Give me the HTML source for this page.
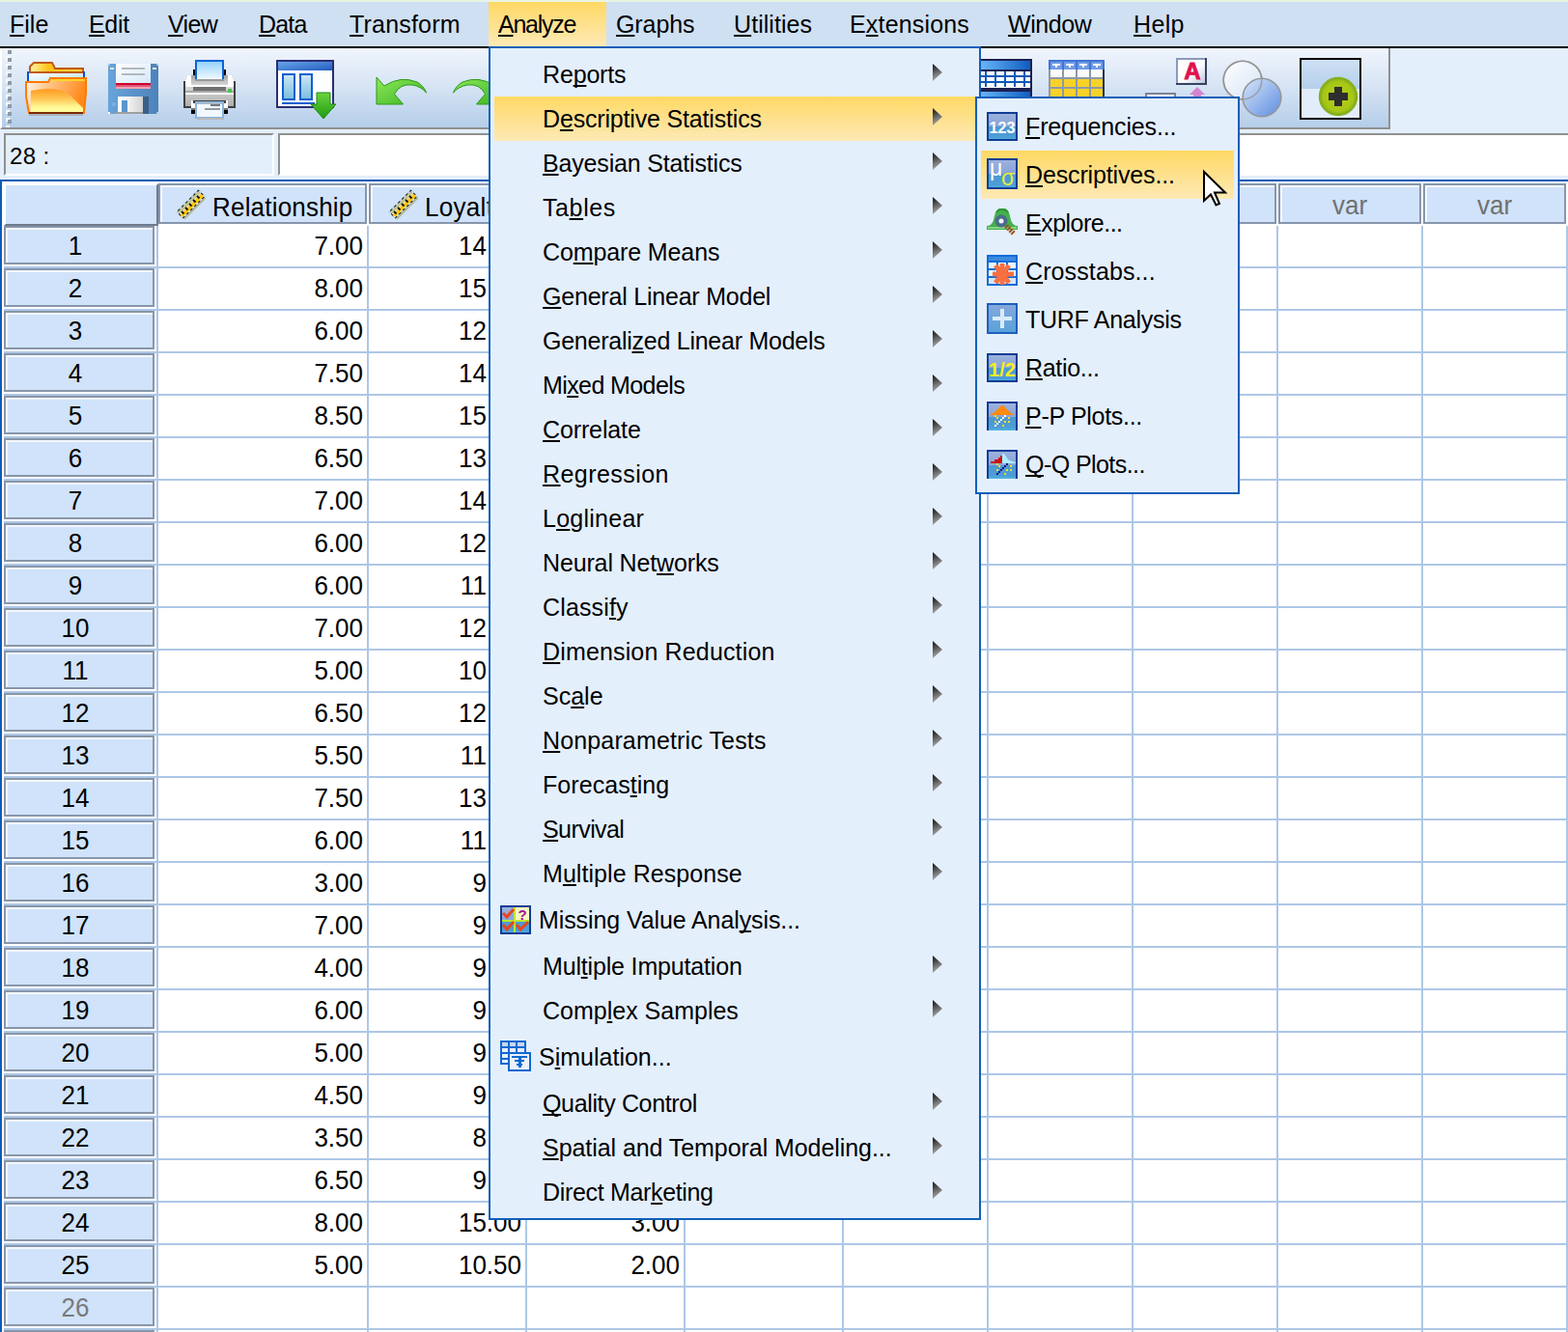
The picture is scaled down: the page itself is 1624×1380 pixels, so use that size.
<!DOCTYPE html>
<html><head><meta charset="utf-8"><title>SPSS Data Editor</title>
<style>
html,body{margin:0;padding:0}
body{width:1624px;height:1380px;overflow:hidden;background:#fff;position:relative;font-family:"Liberation Sans",Arial,sans-serif;color:#000}
div,span{box-sizing:border-box}
u{text-decoration:underline;text-decoration-thickness:2px;text-underline-offset:2px;text-decoration-skip-ink:none}
/* ---- grid ---- */
#grid{position:absolute;left:0;top:184px;width:1624px;height:1196px;background:#fff;overflow:hidden}
#grid::before{content:"";position:absolute;left:0;top:0;width:1624px;height:2px;background:#e4effc}
#grid::after{content:"";position:absolute;left:0;top:2px;width:1624px;height:1194px;border-top:2px solid #0b5cb6;border-left:2px solid #0b5cb6}
#grid>div{position:absolute}
#grid{font-size:26px}
.vl{top:50px;width:2px;height:1150px;background:#adc7e7}
.hl{left:4px;width:1620px;height:2px;background:#adc7e7;margin-top:-184px}
.corner{left:4px;top:6px;width:160px;height:44px;background:#d0e3fa;border-top:2px solid #fff;border-left:2px solid #fff;border-right:2px solid #6f7b8c;border-bottom:2px solid #6f7b8c}
.ch{top:6px;height:42px;background:#d0e3fa;border:2px solid #8896aa;box-shadow:inset 2px 2px 0 #f4f8fe;white-space:nowrap;overflow:hidden}
.ch.var{color:#707070}
.ch.var .gt{left:0;width:100%;top:6px;text-align:center}
.ch.real .ruler{position:absolute;left:15px;top:4px}
.ch.real .gt{left:54px;top:8px}
.rh{left:4px;width:156px;height:40px;margin-top:-184px;background:#d0e3fa;border:2px solid #8896aa;box-shadow:inset 2px 2px 0 #f4f8fe}
.rh .gt{left:0;width:144px;top:4px;text-align:center}
.rh.dim{color:#7a7a7a}
.dc{height:42px;margin-top:-184px}
.dc .gt{right:4px;top:6px}
.gt{position:absolute;display:block;height:30px;line-height:30px;transform:scaleY(1.07);transform-origin:0 24px;white-space:nowrap}
/* ---- chrome ---- */
#strip{position:absolute;left:0;top:0;width:1624px;height:2px;background:#e9f5e2}
#menubar{position:absolute;left:0;top:2px;width:1624px;height:46px;background:#cfe0f3;font-size:25px;line-height:46px}
#menubar span{position:absolute;top:0;white-space:nowrap}
#menubar .hot{position:absolute;left:506px;top:0;width:122px;height:46px;background:linear-gradient(#ffd964,#fde9b6)}
#blackline{position:absolute;left:0;top:48px;width:1624px;height:2px;background:#000}
#tbwrap{position:absolute;left:0;top:50px;width:1624px;height:84px;background:#fff}
#toolbar{position:absolute;left:0;top:0;width:1440px;height:84px;border-left:2px solid #fff;border-right:2px solid #909090;border-bottom:2px solid #909090;background:linear-gradient(#f0f5fd 0%,#dbe7f6 40%,#b5cee9 100%)}
#tbright{position:absolute;left:1440px;top:0;width:184px;height:88px;background:#e4effc}
#cellbox{position:absolute;left:4px;top:138px;width:280px;height:44px;background:#e4effc;border-top:2px solid #909090;border-left:2px solid #909090;border-right:2px solid #fff;border-bottom:2px solid #fff;font-size:24px;line-height:44px;padding-left:4px;letter-spacing:.4px}
#valbox{position:absolute;left:288px;top:138px;width:1340px;height:44px;background:#fff;border-top:2px solid #909090;border-left:2px solid #909090;border-bottom:2px solid #fff}
#midstrip{position:absolute;left:0;top:134px;width:1624px;height:52px;background:#e4effc}
.ico{position:absolute}
/* ---- menus ---- */
.menu{position:absolute;background:#e4effc;border:2px solid #0f5fb9;font-size:25px}
.mi{position:absolute;left:4px;height:46px;line-height:46px;white-space:nowrap}
.mi .t{position:absolute;left:50px;top:0}
.mi.hot{background:linear-gradient(#ffd964,#fde9b6)}
.arr{position:absolute;width:10px;height:18px;background:linear-gradient(155deg,#1c1c1c 0%,#3c3c3c 25%,#777 55%,#b4b4b4 90%);clip-path:polygon(0 0,100% 50%,0 100%)}
.mi .arr{left:454px;top:12px}
</style></head>
<body>
<svg width="0" height="0" style="position:absolute">
<defs>
<linearGradient id="gIcoA" x1="0" y1="0" x2="0" y2="1"><stop offset="0" stop-color="#9db2de"/><stop offset=".5" stop-color="#89a4d6"/><stop offset=".52" stop-color="#4c98d2"/><stop offset=".9" stop-color="#4c9ed6"/><stop offset="1" stop-color="#52b8e4"/></linearGradient>
<linearGradient id="gIcoT" x1="0" y1="0" x2="0" y2="1"><stop offset="0" stop-color="#86a8dc"/><stop offset="1" stop-color="#58a2d8"/></linearGradient>
<linearGradient id="gRul" x1="0" y1="0" x2="1" y2="1" gradientUnits="userSpaceOnUse"><stop offset="0" stop-color="#c9cf9c"/></linearGradient>
<symbol id="ruler" viewBox="0 0 32 32">
<polygon points="3,24 25,2 31,8 9,30" fill="#9a9242" opacity=".55" transform="translate(1.500,1.500)"/>
<polygon points="1.500,23.500 24.500,0.500 31.500,7.500 8.500,30.500" fill="#111"/>
<polygon points="3,23.500 24.500,2 30,7.500 8.500,29" fill="#c3c98e"/>
<polygon points="6,26.500 27.500,5 30,7.500 8.500,29" fill="#ffc800"/>
<polygon points="5,25.500 26.500,4 27.500,5 6,26.500" fill="#f5d5a0"/>
<g stroke="#111" stroke-width="1.800"><path d="M9.500 25.500 l-2.500-2.500 M13.500 21.500 l-2.500-2.500 M17.500 17.500 l-2.500-2.500 M21.500 13.500 l-2.500-2.500 M25.500 9.500 l-2.500-2.500"/></g>
<polygon points="2.250,23.500 24.500,1.250 30.750,7.500 8.500,29.750" fill="none" stroke="#d0e3fa" stroke-width="1.500" stroke-dasharray="2.830 2.830" stroke-dashoffset="1.400"/>
</symbol>
<symbol id="ic-freq" viewBox="0 0 32 32">
<rect x="1" y="2" width="30" height="28" fill="url(#gIcoA)" stroke="#0f3c96" stroke-width="2"/>
<text x="16" y="23" font-family="Liberation Sans, sans-serif" font-weight="bold" font-size="17" text-anchor="middle" fill="#fff" textLength="27" lengthAdjust="spacingAndGlyphs">123</text>
</symbol>
<symbol id="ic-desc" viewBox="0 0 32 32">
<rect x="1" y="1" width="30" height="30" fill="url(#gIcoA)" stroke="#0f3c96" stroke-width="2"/>
<text x="3" y="17.500" font-family="Liberation Sans, sans-serif" font-size="23" fill="#fff">μ</text>
<text x="15" y="27.500" font-family="Liberation Sans, sans-serif" font-size="23" fill="#e6ea3c">σ</text>
</symbol>
<symbol id="ic-expl" viewBox="0 0 32 32">
<path d="M0 20 Q5 20 7 14 Q9 3 13 2 H19 Q23 3 25 14 Q27 20 32 20 V24 H0 Z" fill="#45b04c"/>
<path d="M1 22 H31" stroke="#86d488" stroke-width="2"/>
<path d="M10 6 Q12 3 16 3 Q20 3 22 6" stroke="#2f9838" stroke-width="2" fill="none"/>
<circle cx="15" cy="15" r="6.500" fill="#4a6c8a"/>
<circle cx="15" cy="15" r="2.500" fill="#f0f4f8"/>
<path d="M20 20 L28 28" stroke="#9a5020" stroke-width="5" stroke-dasharray="2 1"/>
</symbol>
<symbol id="ic-cross" viewBox="0 0 32 32">
<rect x="1" y="1" width="30" height="30" fill="#eef5fd" stroke="#0f6cd8" stroke-width="2"/>
<rect x="2" y="2" width="28" height="6" fill="#3a8ae0"/>
<rect x="2" y="24" width="28" height="6" fill="#d4e8fb"/>
<g fill="#0f6cd8"><rect x="2" y="6" width="28" height="2"/><rect x="2" y="14" width="28" height="2"/><rect x="2" y="22" width="28" height="2"/><rect x="10" y="8" width="2" height="22"/><rect x="20" y="8" width="2" height="22"/></g>
<g stroke="#f87040" stroke-width="5" stroke-linecap="butt"><path d="M16 9 V31"/><path d="M6 20 H28"/><path d="M9 11 L23 29"/><path d="M23 11 L9 29"/></g>
</symbol>
<symbol id="ic-turf" viewBox="0 0 32 32">
<rect x="1" y="1" width="30" height="30" fill="url(#gIcoT)" stroke="#1f5fc0" stroke-width="2"/>
<rect x="6" y="14" width="20" height="4" fill="#d8ecf8"/><rect x="14" y="6" width="4" height="20" fill="#d8ecf8"/>
</symbol>
<symbol id="ic-ratio" viewBox="0 0 32 32">
<rect x="1" y="2" width="30" height="28" fill="url(#gIcoA)" stroke="#0f3c96" stroke-width="2"/>
<text x="16" y="25" font-family="Liberation Sans, sans-serif" font-weight="bold" font-size="20" text-anchor="middle" fill="#f6ee22" textLength="28" lengthAdjust="spacingAndGlyphs">1/2</text>
</symbol>
<symbol id="ic-pp" viewBox="0 0 32 32">
<rect x="2" y="3" width="28" height="28" fill="url(#gIcoA)"/>
<path d="M1 31 V2 H31 V31" fill="none" stroke="#0f3c96" stroke-width="2"/>
<path d="M2 15 L8 12 L15 5 L17 5 L24 12 L28 15 Z" fill="#ff8a10"/>
<g fill="#fff"><rect x="18" y="15" width="2" height="2"/><rect x="16" y="17" width="2" height="2"/><rect x="14" y="19" width="2" height="2"/><rect x="12" y="21" width="2" height="2"/><rect x="10" y="23" width="2" height="2"/><rect x="8" y="25" width="2" height="2"/></g>
<g fill="#f8e020"><rect x="8" y="15" width="2" height="2"/><rect x="10" y="17" width="2" height="2"/><rect x="22" y="17" width="2" height="2"/><rect x="8" y="21" width="2" height="2"/><rect x="18" y="21" width="2" height="2"/><rect x="22" y="21" width="2" height="2"/><rect x="16" y="25" width="2" height="2"/></g>
</symbol>
<symbol id="ic-qq" viewBox="0 0 32 32">
<rect x="2" y="3" width="28" height="28" fill="url(#gIcoA)"/>
<path d="M1 31 V2 H31 V31" fill="none" stroke="#0f3c96" stroke-width="2"/>
<path d="M4 15 V13 H8 V11 H12 V9 H14 V7 H16 V15 Z" fill="#cc1212"/>
<path d="M16 15 V5 H18 L22 11 L26 13 L30 14 V15 Z" fill="#aaf0ff"/>
<g fill="#10108a"><rect x="20" y="15" width="2" height="2"/><rect x="18" y="17" width="2" height="2"/><rect x="16" y="19" width="2" height="2"/><rect x="14" y="21" width="2" height="2"/><rect x="12" y="23" width="2" height="2"/><rect x="10" y="25" width="2" height="2"/></g>
<g fill="#f8e020"><rect x="10" y="15" width="2" height="2"/><rect x="12" y="17" width="2" height="2"/><rect x="24" y="17" width="2" height="2"/><rect x="10" y="21" width="2" height="2"/><rect x="20" y="21" width="2" height="2"/><rect x="24" y="21" width="2" height="2"/><rect x="18" y="25" width="2" height="2"/></g>
</symbol>
<symbol id="ic-mva" viewBox="0 0 32 32">
<rect x="1" y="2" width="30" height="28" fill="url(#gIcoA)" stroke="#0f3c96" stroke-width="2"/>
<rect x="16" y="3" width="14" height="13" fill="#f6f6c0"/>
<rect x="14" y="3" width="2" height="26" fill="#b8e830"/><rect x="2" y="16" width="28" height="2" fill="#b8e830"/>
<g fill="none" stroke="#e84420" stroke-width="3"><path d="M3 9 L7 13 L14 5"/><path d="M3 21 L7 26 L14 18"/><path d="M17 21 L21 26 L29 18"/></g>
<text x="23" y="15.500" font-family="Liberation Sans, sans-serif" font-weight="bold" font-size="15" text-anchor="middle" fill="#a010a0">?</text>
</symbol>
<symbol id="ic-sim" viewBox="0 0 32 32">
<rect x="1" y="1" width="25" height="23" fill="#e4effb" stroke="#1068d0" stroke-width="2"/>
<g fill="#1068d0"><rect x="1" y="6" width="25" height="2"/><rect x="1" y="12" width="25" height="2"/><rect x="1" y="18" width="25" height="2"/><rect x="8" y="1" width="2" height="23"/><rect x="16" y="1" width="2" height="23"/></g>
<g fill="#c4d8ee"><rect x="2" y="2" width="6" height="4"/><rect x="10" y="2" width="6" height="4"/><rect x="18" y="2" width="7" height="4"/></g>
<rect x="9" y="13" width="22" height="18" fill="#eaf1f9" stroke="#1068d0" stroke-width="2"/>
<g fill="#1068d0"><rect x="12" y="16" width="16" height="2"/><rect x="15" y="20" width="10" height="2"/><rect x="17" y="24" width="6" height="2"/><rect x="19" y="18" width="3" height="10"/></g>
</symbol>
</defs>
</svg>
<div id="grid">
<div class="vl" style="left:162px"></div><div class="vl" style="left:380px"></div><div class="vl" style="left:544px"></div><div class="vl" style="left:708px"></div><div class="vl" style="left:872px"></div><div class="vl" style="left:1022px"></div><div class="vl" style="left:1172px"></div><div class="vl" style="left:1322px"></div><div class="vl" style="left:1472px"></div><div class="vl" style="left:1622px"></div>
<div class="hl" style="top:276px"></div><div class="hl" style="top:320px"></div><div class="hl" style="top:364px"></div><div class="hl" style="top:408px"></div><div class="hl" style="top:452px"></div><div class="hl" style="top:496px"></div><div class="hl" style="top:540px"></div><div class="hl" style="top:584px"></div><div class="hl" style="top:628px"></div><div class="hl" style="top:672px"></div><div class="hl" style="top:716px"></div><div class="hl" style="top:760px"></div><div class="hl" style="top:804px"></div><div class="hl" style="top:848px"></div><div class="hl" style="top:892px"></div><div class="hl" style="top:936px"></div><div class="hl" style="top:980px"></div><div class="hl" style="top:1024px"></div><div class="hl" style="top:1068px"></div><div class="hl" style="top:1112px"></div><div class="hl" style="top:1156px"></div><div class="hl" style="top:1200px"></div><div class="hl" style="top:1244px"></div><div class="hl" style="top:1288px"></div><div class="hl" style="top:1332px"></div><div class="hl" style="top:1376px"></div><div class="hl" style="top:1420px"></div>
<div class="corner"></div>
<div class="ch real" style="left:164px;width:216px"><svg class="ruler" style="left:15px" width="32" height="32" viewBox="0 0 32 32"><use href="#ruler"/></svg><span class="gt" style="left:54px;letter-spacing:0.2px">Relationship</span></div>
<div class="ch real" style="left:382px;width:162px"><svg class="ruler" style="left:17px" width="32" height="32" viewBox="0 0 32 32"><use href="#ruler"/></svg><span class="gt" style="left:56px;letter-spacing:0.3px">Loyalty</span></div>
<div class="ch real" style="left:546px;width:162px"><svg class="ruler" style="left:17px" width="32" height="32" viewBox="0 0 32 32"><use href="#ruler"/></svg><span class="gt" style="left:56px;letter-spacing:0.3px">Outcome</span></div>
<div class="ch var" style="left:710px;width:162px"><span class="gt">var</span></div>
<div class="ch var" style="left:874px;width:148px"><span class="gt">var</span></div>
<div class="ch var" style="left:1024px;width:148px"><span class="gt">var</span></div>
<div class="ch var" style="left:1174px;width:148px"><span class="gt">var</span></div>
<div class="ch var" style="left:1324px;width:148px"><span class="gt">var</span></div>
<div class="ch var" style="left:1474px;width:148px"><span class="gt">var</span></div>
<div class="rh" style="top:234px"><span class="gt">1</span></div><div class="dc" style="top:234px;left:164px;width:216px"><span class="gt">7.00</span></div><div class="dc" style="top:234px;left:382px;width:162px;clip-path:inset(0 40px 0 0)"><span class="gt">14.00</span></div><div class="dc" style="top:234px;left:546px;width:162px"><span class="gt">3.00</span></div>
<div class="rh" style="top:278px"><span class="gt">2</span></div><div class="dc" style="top:278px;left:164px;width:216px"><span class="gt">8.00</span></div><div class="dc" style="top:278px;left:382px;width:162px;clip-path:inset(0 40px 0 0)"><span class="gt">15.00</span></div><div class="dc" style="top:278px;left:546px;width:162px"><span class="gt">3.00</span></div>
<div class="rh" style="top:322px"><span class="gt">3</span></div><div class="dc" style="top:322px;left:164px;width:216px"><span class="gt">6.00</span></div><div class="dc" style="top:322px;left:382px;width:162px;clip-path:inset(0 40px 0 0)"><span class="gt">12.00</span></div><div class="dc" style="top:322px;left:546px;width:162px"><span class="gt">2.00</span></div>
<div class="rh" style="top:366px"><span class="gt">4</span></div><div class="dc" style="top:366px;left:164px;width:216px"><span class="gt">7.50</span></div><div class="dc" style="top:366px;left:382px;width:162px;clip-path:inset(0 40px 0 0)"><span class="gt">14.50</span></div><div class="dc" style="top:366px;left:546px;width:162px"><span class="gt">3.00</span></div>
<div class="rh" style="top:410px"><span class="gt">5</span></div><div class="dc" style="top:410px;left:164px;width:216px"><span class="gt">8.50</span></div><div class="dc" style="top:410px;left:382px;width:162px;clip-path:inset(0 40px 0 0)"><span class="gt">15.50</span></div><div class="dc" style="top:410px;left:546px;width:162px"><span class="gt">3.00</span></div>
<div class="rh" style="top:454px"><span class="gt">6</span></div><div class="dc" style="top:454px;left:164px;width:216px"><span class="gt">6.50</span></div><div class="dc" style="top:454px;left:382px;width:162px;clip-path:inset(0 40px 0 0)"><span class="gt">13.00</span></div><div class="dc" style="top:454px;left:546px;width:162px"><span class="gt">2.00</span></div>
<div class="rh" style="top:498px"><span class="gt">7</span></div><div class="dc" style="top:498px;left:164px;width:216px"><span class="gt">7.00</span></div><div class="dc" style="top:498px;left:382px;width:162px;clip-path:inset(0 40px 0 0)"><span class="gt">14.00</span></div><div class="dc" style="top:498px;left:546px;width:162px"><span class="gt">3.00</span></div>
<div class="rh" style="top:542px"><span class="gt">8</span></div><div class="dc" style="top:542px;left:164px;width:216px"><span class="gt">6.00</span></div><div class="dc" style="top:542px;left:382px;width:162px;clip-path:inset(0 40px 0 0)"><span class="gt">12.50</span></div><div class="dc" style="top:542px;left:546px;width:162px"><span class="gt">2.00</span></div>
<div class="rh" style="top:586px"><span class="gt">9</span></div><div class="dc" style="top:586px;left:164px;width:216px"><span class="gt">6.00</span></div><div class="dc" style="top:586px;left:382px;width:162px;clip-path:inset(0 40px 0 0)"><span class="gt">11.00</span></div><div class="dc" style="top:586px;left:546px;width:162px"><span class="gt">2.00</span></div>
<div class="rh" style="top:630px"><span class="gt">10</span></div><div class="dc" style="top:630px;left:164px;width:216px"><span class="gt">7.00</span></div><div class="dc" style="top:630px;left:382px;width:162px;clip-path:inset(0 40px 0 0)"><span class="gt">12.00</span></div><div class="dc" style="top:630px;left:546px;width:162px"><span class="gt">3.00</span></div>
<div class="rh" style="top:674px"><span class="gt">11</span></div><div class="dc" style="top:674px;left:164px;width:216px"><span class="gt">5.00</span></div><div class="dc" style="top:674px;left:382px;width:162px;clip-path:inset(0 40px 0 0)"><span class="gt">10.00</span></div><div class="dc" style="top:674px;left:546px;width:162px"><span class="gt">2.00</span></div>
<div class="rh" style="top:718px"><span class="gt">12</span></div><div class="dc" style="top:718px;left:164px;width:216px"><span class="gt">6.50</span></div><div class="dc" style="top:718px;left:382px;width:162px;clip-path:inset(0 40px 0 0)"><span class="gt">12.50</span></div><div class="dc" style="top:718px;left:546px;width:162px"><span class="gt">2.00</span></div>
<div class="rh" style="top:762px"><span class="gt">13</span></div><div class="dc" style="top:762px;left:164px;width:216px"><span class="gt">5.50</span></div><div class="dc" style="top:762px;left:382px;width:162px;clip-path:inset(0 40px 0 0)"><span class="gt">11.50</span></div><div class="dc" style="top:762px;left:546px;width:162px"><span class="gt">2.00</span></div>
<div class="rh" style="top:806px"><span class="gt">14</span></div><div class="dc" style="top:806px;left:164px;width:216px"><span class="gt">7.50</span></div><div class="dc" style="top:806px;left:382px;width:162px;clip-path:inset(0 40px 0 0)"><span class="gt">13.00</span></div><div class="dc" style="top:806px;left:546px;width:162px"><span class="gt">3.00</span></div>
<div class="rh" style="top:850px"><span class="gt">15</span></div><div class="dc" style="top:850px;left:164px;width:216px"><span class="gt">6.00</span></div><div class="dc" style="top:850px;left:382px;width:162px;clip-path:inset(0 40px 0 0)"><span class="gt">11.00</span></div><div class="dc" style="top:850px;left:546px;width:162px"><span class="gt">2.00</span></div>
<div class="rh" style="top:894px"><span class="gt">16</span></div><div class="dc" style="top:894px;left:164px;width:216px"><span class="gt">3.00</span></div><div class="dc" style="top:894px;left:382px;width:162px;clip-path:inset(0 40px 0 0)"><span class="gt">9.00</span></div><div class="dc" style="top:894px;left:546px;width:162px"><span class="gt">1.00</span></div>
<div class="rh" style="top:938px"><span class="gt">17</span></div><div class="dc" style="top:938px;left:164px;width:216px"><span class="gt">7.00</span></div><div class="dc" style="top:938px;left:382px;width:162px;clip-path:inset(0 40px 0 0)"><span class="gt">9.50</span></div><div class="dc" style="top:938px;left:546px;width:162px"><span class="gt">2.00</span></div>
<div class="rh" style="top:982px"><span class="gt">18</span></div><div class="dc" style="top:982px;left:164px;width:216px"><span class="gt">4.00</span></div><div class="dc" style="top:982px;left:382px;width:162px;clip-path:inset(0 40px 0 0)"><span class="gt">9.00</span></div><div class="dc" style="top:982px;left:546px;width:162px"><span class="gt">1.00</span></div>
<div class="rh" style="top:1026px"><span class="gt">19</span></div><div class="dc" style="top:1026px;left:164px;width:216px"><span class="gt">6.00</span></div><div class="dc" style="top:1026px;left:382px;width:162px;clip-path:inset(0 40px 0 0)"><span class="gt">9.50</span></div><div class="dc" style="top:1026px;left:546px;width:162px"><span class="gt">2.00</span></div>
<div class="rh" style="top:1070px"><span class="gt">20</span></div><div class="dc" style="top:1070px;left:164px;width:216px"><span class="gt">5.00</span></div><div class="dc" style="top:1070px;left:382px;width:162px;clip-path:inset(0 40px 0 0)"><span class="gt">9.00</span></div><div class="dc" style="top:1070px;left:546px;width:162px"><span class="gt">1.00</span></div>
<div class="rh" style="top:1114px"><span class="gt">21</span></div><div class="dc" style="top:1114px;left:164px;width:216px"><span class="gt">4.50</span></div><div class="dc" style="top:1114px;left:382px;width:162px;clip-path:inset(0 40px 0 0)"><span class="gt">9.00</span></div><div class="dc" style="top:1114px;left:546px;width:162px"><span class="gt">1.00</span></div>
<div class="rh" style="top:1158px"><span class="gt">22</span></div><div class="dc" style="top:1158px;left:164px;width:216px"><span class="gt">3.50</span></div><div class="dc" style="top:1158px;left:382px;width:162px;clip-path:inset(0 40px 0 0)"><span class="gt">8.50</span></div><div class="dc" style="top:1158px;left:546px;width:162px"><span class="gt">1.00</span></div>
<div class="rh" style="top:1202px"><span class="gt">23</span></div><div class="dc" style="top:1202px;left:164px;width:216px"><span class="gt">6.50</span></div><div class="dc" style="top:1202px;left:382px;width:162px;clip-path:inset(0 40px 0 0)"><span class="gt">9.50</span></div><div class="dc" style="top:1202px;left:546px;width:162px"><span class="gt">2.00</span></div>
<div class="rh" style="top:1246px"><span class="gt">24</span></div><div class="dc" style="top:1246px;left:164px;width:216px"><span class="gt">8.00</span></div><div class="dc" style="top:1246px;left:382px;width:162px"><span class="gt">15.00</span></div><div class="dc" style="top:1246px;left:546px;width:162px"><span class="gt">3.00</span></div>
<div class="rh" style="top:1290px"><span class="gt">25</span></div><div class="dc" style="top:1290px;left:164px;width:216px"><span class="gt">5.00</span></div><div class="dc" style="top:1290px;left:382px;width:162px"><span class="gt">10.50</span></div><div class="dc" style="top:1290px;left:546px;width:162px"><span class="gt">2.00</span></div>
<div class="rh dim" style="top:1334px"><span class="gt">26</span></div>
<div class="rh dim" style="top:1378px"><span class="gt">27</span></div>
</div>
<div id="strip"></div>
<div id="menubar"><div class="hot"></div>
<span style="left:10px;letter-spacing:0.000px"><u>F</u>ile</span><span style="left:92px;letter-spacing:-0.333px"><u>E</u>dit</span><span style="left:174px;letter-spacing:-0.667px"><u>V</u>iew</span><span style="left:268px;letter-spacing:-0.833px"><u>D</u>ata</span><span style="left:362px;letter-spacing:0.188px"><u>T</u>ransform</span><span style="left:516px;letter-spacing:-1.250px"><u>A</u>nalyze</span><span style="left:638px;letter-spacing:-0.100px"><u>G</u>raphs</span><span style="left:760px;letter-spacing:0.062px"><u>U</u>tilities</span><span style="left:880px;letter-spacing:0.167px">E<u>x</u>tensions</span><span style="left:1044px;letter-spacing:-0.400px"><u>W</u>indow</span><span style="left:1174px;letter-spacing:0.333px"><u>H</u>elp</span>
</div>
<div id="blackline"></div>
<div id="midstrip"></div>
<div id="tbwrap"><div id="toolbar"></div><div id="tbright"></div></div>
<div id="cellbox">28 :</div>
<div id="valbox"></div>
<svg id="tbicons" style="position:absolute;left:0;top:50px" width="1624" height="84" viewBox="0 50 1624 84" shape-rendering="auto">
<defs>
<linearGradient id="gFoldBack" x1="0" y1="0" x2="1" y2="0"><stop offset="0" stop-color="#fff6a8"/><stop offset=".35" stop-color="#ffc21a"/><stop offset="1" stop-color="#ffd83a"/></linearGradient>
<linearGradient id="gPaper" x1="0" y1="0" x2="1" y2="1"><stop offset="0" stop-color="#ffffff"/><stop offset=".5" stop-color="#d8f0fc"/><stop offset="1" stop-color="#a8e0fa"/></linearGradient>
<linearGradient id="gFoldFront" x1="0" y1="0" x2="1" y2="0.25"><stop offset="0" stop-color="#fff8ec"/><stop offset=".45" stop-color="#ffc080"/><stop offset="1" stop-color="#ff8a1c"/></linearGradient>
<linearGradient id="gFoldLow" x1="0" y1="0" x2="0" y2="1"><stop offset="0" stop-color="#ff9a1e"/><stop offset=".45" stop-color="#ffc858"/><stop offset=".8" stop-color="#fffa98"/><stop offset="1" stop-color="#fffc9c"/></linearGradient>
<linearGradient id="gFlop" x1="0" y1="0" x2="1" y2="0"><stop offset="0" stop-color="#68a4da"/><stop offset="1" stop-color="#4c82ba"/></linearGradient>
<linearGradient id="gLabel" x1="0" y1="0" x2="1" y2="1"><stop offset="0" stop-color="#ffffff"/><stop offset="1" stop-color="#d4e8fa"/></linearGradient>
<linearGradient id="gShut" x1="0" y1="0" x2="1" y2="0"><stop offset="0" stop-color="#ffffff"/><stop offset=".4" stop-color="#f4f4f4"/><stop offset="1" stop-color="#d2d2d2"/></linearGradient>
<linearGradient id="gPP" x1="0" y1="0" x2="0" y2="1"><stop offset="0" stop-color="#8fd0fc"/><stop offset="1" stop-color="#f2faff"/></linearGradient>
<linearGradient id="gPrB" x1="0" y1="0" x2="0" y2="1"><stop offset="0" stop-color="#f0f0f0"/><stop offset="1" stop-color="#aaaaaa"/></linearGradient>
<linearGradient id="gPrT" x1="0" y1="0" x2="0" y2="1"><stop offset="0" stop-color="#a4a4a4"/><stop offset="1" stop-color="#d6d6d6"/></linearGradient>
<linearGradient id="gTitle" x1="0" y1="0" x2="1" y2="1"><stop offset="0" stop-color="#6aa6e8"/><stop offset="1" stop-color="#1f5cc0"/></linearGradient>
<linearGradient id="gPane" x1="0" y1="0" x2="0" y2="1"><stop offset="0" stop-color="#cfe8f6"/><stop offset="1" stop-color="#78bde0"/></linearGradient>
<linearGradient id="gGreen" x1="0" y1="0" x2="0" y2="1"><stop offset="0" stop-color="#6cd43c"/><stop offset="1" stop-color="#1f9a14"/></linearGradient>
<linearGradient id="gGreen2" x1="0" y1="0" x2="1" y2="1"><stop offset="0" stop-color="#8ee85a"/><stop offset="1" stop-color="#3cb422"/></linearGradient>
<linearGradient id="gTbl" x1="0" y1="0" x2="1" y2="0"><stop offset="0" stop-color="#8cc6fa"/><stop offset=".35" stop-color="#5aa8f0"/><stop offset="1" stop-color="#0f5cc0"/></linearGradient>
<linearGradient id="gC1" x1="0" y1="0" x2="1" y2="1"><stop offset="0" stop-color="#ffffff"/><stop offset="1" stop-color="#d4e2f6"/></linearGradient>
<linearGradient id="gC2" x1="0" y1="0" x2="1" y2="1"><stop offset="0" stop-color="#d8e6fa"/><stop offset="1" stop-color="#5c8ce0"/></linearGradient>
<linearGradient id="gBtn" x1="0" y1="0" x2="0" y2="1"><stop offset="0" stop-color="#cfe0f4"/><stop offset="1" stop-color="#b4cfec"/></linearGradient>
<radialGradient id="gPlus" cx=".5" cy=".5" r=".5"><stop offset="0" stop-color="#b4d018"/><stop offset=".8" stop-color="#a6c616"/><stop offset="1" stop-color="#7aa81c"/></radialGradient>
<linearGradient id="gAbox" x1="0" y1="0" x2="1" y2="1"><stop offset="0" stop-color="#ffffff"/><stop offset=".55" stop-color="#fbfbfd"/><stop offset="1" stop-color="#b8c2dc"/></linearGradient>
</defs>
<!-- grip -->
<g fill="#8e9aa8">
<rect x="6" y="50" width="4" height="4" fill="#f6f9fd"/>
<rect x="8" y="52" width="4" height="4"/>
<rect x="6" y="58" width="4" height="4" fill="#f6f9fd"/>
<rect x="8" y="60" width="4" height="4"/>
<rect x="6" y="66" width="4" height="4" fill="#f6f9fd"/>
<rect x="8" y="68" width="4" height="4"/>
<rect x="6" y="74" width="4" height="4" fill="#f6f9fd"/>
<rect x="8" y="76" width="4" height="4"/>
<rect x="6" y="82" width="4" height="4" fill="#f6f9fd"/>
<rect x="8" y="84" width="4" height="4"/>
<rect x="6" y="90" width="4" height="4" fill="#f6f9fd"/>
<rect x="8" y="92" width="4" height="4"/>
<rect x="6" y="98" width="4" height="4" fill="#f6f9fd"/>
<rect x="8" y="100" width="4" height="4"/>
<rect x="6" y="106" width="4" height="4" fill="#f6f9fd"/>
<rect x="8" y="108" width="4" height="4"/>
<rect x="6" y="114" width="4" height="4" fill="#f6f9fd"/>
<rect x="8" y="116" width="4" height="4"/>
<rect x="6" y="122" width="4" height="4" fill="#f6f9fd"/>
<rect x="8" y="124" width="4" height="4"/>
<rect x="6" y="130" width="4" height="2" fill="#f6f9fd"/>
</g>
<!-- folder -->
<g>
<path d="M31 76 V69 L35 65 H54 L57 71 H86 V76 Z" fill="url(#gFoldBack)" stroke="#c25a16" stroke-width="2" stroke-linejoin="miter"/>
<rect x="29" y="75" width="58" height="12" fill="url(#gPaper)" stroke="#0a50d0" stroke-width="2"/>
<rect x="30" y="74" width="56" height="2" fill="#c25a16"/>
<path d="M27 85 H50 L52 81 H89 V96 L87 117 H30 L27 100 Z" fill="url(#gFoldFront)" stroke="#ff7a00" stroke-width="2" stroke-linejoin="miter"/>
<rect x="54" y="82" width="34" height="2" fill="#ffd428"/>
<path d="M32 94 Q62 88 74 100 Q82 108 86 112 V116 H32 Z" fill="url(#gFoldLow)"/>
<rect x="30" y="116" width="56" height="2" fill="#7a2c00"/>
<rect x="30" y="118" width="56" height="2" fill="#9a9a9a" opacity=".6"/>
</g>
<!-- floppy -->
<g>
<rect x="112" y="66" width="52" height="52" fill="url(#gFlop)"/>
<rect x="120" y="66" width="36" height="20" fill="url(#gLabel)"/>
<rect x="126" y="70" width="24" height="2" fill="#b2b8be"/><rect x="126" y="76" width="24" height="2" fill="#b2b8be"/>
<rect x="120" y="86" width="36" height="2" fill="#cf002c"/><rect x="120" y="88" width="36" height="2" fill="#e05878"/><rect x="120" y="90" width="36" height="2" fill="#f4a2b2"/>
<rect x="114" y="70" width="4" height="2" fill="#f2e4cc"/><rect x="158" y="70" width="4" height="2" fill="#f2e4cc"/>
<rect x="122" y="100" width="26" height="16" fill="url(#gShut)"/>
<rect x="126" y="104" width="6" height="12" fill="#5a96cc"/>
<rect x="148" y="100" width="6" height="18" fill="#3a6088"/>
<rect x="120" y="116" width="28" height="2" fill="#a0a0a0"/>
<rect x="116" y="106" width="4" height="4" fill="#7aaedc"/>
<rect x="112" y="116" width="2" height="2" fill="#fff"/><rect x="112" y="66" width="2" height="2" fill="#a8c8e8"/><rect x="162" y="66" width="2" height="2" fill="#a8c8e8"/><rect x="162" y="116" width="2" height="2" fill="#a8c8e8"/>
</g>
<!-- printer -->
<g>
<rect x="200" y="72" width="34" height="6" fill="#000"/>
<path d="M194 78 H240 L244 84 V112 H190 V84 Z" fill="url(#gPrB)"/>
<path d="M194 78 H240 L243 86 V88 H191 V86 Z" fill="url(#gPrT)"/>
<path d="M203 82 V63 H231 V82" fill="url(#gPP)" stroke="#0a64d8" stroke-width="2"/>
<rect x="202" y="82" width="30" height="2" fill="#9a9a9a"/>
<path d="M194 78 L198 78 L198 88 L192 88 L192 84 Z" fill="#fff"/><path d="M240 78 L236 78 L236 88 L242 88 L242 84 Z" fill="#fff"/>
<rect x="192" y="88" width="50" height="2" fill="#fff"/>
<rect x="200" y="90" width="34" height="4" fill="#707070"/>
<rect x="192" y="94" width="50" height="2" fill="#a8a8a8"/>
<rect x="192" y="96" width="50" height="2" fill="#fff"/>
<rect x="236" y="92" width="4" height="4" fill="#4cc04c"/>
<path d="M191 84 V111 H243 V84" fill="none" stroke="#404040" stroke-width="2"/>
<rect x="198" y="104" width="38" height="8" fill="#fff"/>
<rect x="200" y="104" width="34" height="3" fill="#444"/>
<rect x="198" y="114" width="4" height="4" fill="#000"/><rect x="232" y="114" width="4" height="4" fill="#000"/>
<rect x="198" y="112" width="4" height="2" fill="#777"/><rect x="232" y="112" width="4" height="2" fill="#777"/>
<rect x="203" y="106" width="28" height="16" fill="#f2f8fe" stroke="#86b4e2" stroke-width="2"/>
<rect x="204" y="106" width="26" height="2" fill="#a8b8c8"/>
<rect x="218" y="108" width="10" height="2" fill="#70787e"/><rect x="212" y="112" width="16" height="2" fill="#909aa0"/>
<rect x="204" y="122" width="28" height="2" fill="#b8b8b8"/>
</g>
<!-- dialog recall -->
<g>
<rect x="287" y="63" width="58" height="48" fill="#fdfefe" stroke="#2c2c74" stroke-width="2"/>
<rect x="288" y="64" width="56" height="9" fill="url(#gTitle)"/>
<rect x="293" y="77" width="12" height="26" fill="url(#gPane)" stroke="#0f5fd0" stroke-width="2"/>
<rect x="311" y="77" width="12" height="26" fill="url(#gPane)" stroke="#0f5fd0" stroke-width="2"/>
<rect x="292" y="106" width="34" height="2" fill="#0f5fd0"/>
<path d="M328 96 H342 V108 H348 L335 123 L322 108 H328 Z" fill="url(#gGreen)" stroke="#1c8a10" stroke-width="1"/>
</g>
<!-- undo -->
<path d="M390 80 L398 89 Q415 78 432 85 Q439 89 441.500 96 Q436 89.500 427 88 Q414 86.500 408.500 97.500 L417.500 108 H390 Z" fill="url(#gGreen2)" stroke="#2a9a18" stroke-width="1" stroke-linejoin="round"/>
<!-- redo (mostly hidden) -->
<path d="M521 80 L513 89 Q496 78 479 85 Q472 89 469.500 96 Q475 89.500 484 88 Q497 86.500 502.500 97.500 L493.500 108 H521 Z" fill="url(#gGreen2)" stroke="#2a9a18" stroke-width="1" stroke-linejoin="round"/>
<!-- table icon 1 -->
<g>
<rect x="1000" y="62" width="68" height="30" fill="#fff" stroke="#1a2052" stroke-width="2"/>
<rect x="1001" y="63" width="66" height="9" fill="url(#gTbl)"/>
<rect x="1001" y="72" width="66" height="2" fill="#1a2052"/>
<g fill="#0a58b8"><rect x="1001" y="78" width="66" height="2"/><rect x="1001" y="84" width="66" height="2"/>
<rect x="1020" y="74" width="2" height="16"/><rect x="1030" y="74" width="2" height="16"/><rect x="1040" y="74" width="2" height="16"/><rect x="1050" y="74" width="2" height="16"/><rect x="1060" y="74" width="2" height="16"/></g>
<rect x="1000" y="94" width="68" height="10" fill="url(#gTbl)" stroke="#1a2052" stroke-width="2"/>
</g>
<!-- table icon 2 -->
<g>
<rect x="1086" y="62" width="58" height="44" fill="#8f98a8"/>
<rect x="1086" y="62" width="58" height="10" fill="#3f74d4"/>
<g fill="#6f9ae4"><rect x="1088" y="64" width="12" height="8"/><rect x="1102" y="64" width="12" height="8"/><rect x="1116" y="64" width="12" height="8"/><rect x="1130" y="64" width="12" height="8"/></g>
<g fill="#fff"><rect x="1090" y="66" width="8" height="2"/><rect x="1093" y="68" width="2" height="2"/><rect x="1104" y="66" width="8" height="2"/><rect x="1107" y="68" width="2" height="2"/><rect x="1118" y="66" width="8" height="2"/><rect x="1121" y="68" width="2" height="2"/><rect x="1132" y="66" width="8" height="2"/><rect x="1135" y="68" width="2" height="2"/></g>
<g fill="#fbfbfb"><rect x="1088" y="72" width="12" height="8"/><rect x="1102" y="72" width="12" height="8"/><rect x="1116" y="72" width="12" height="8"/><rect x="1130" y="72" width="12" height="8"/></g>
<g fill="#f8d228"><rect x="1088" y="82" width="12" height="8"/><rect x="1102" y="82" width="12" height="8"/><rect x="1116" y="82" width="12" height="8"/><rect x="1130" y="82" width="12" height="8"/>
<rect x="1088" y="92" width="12" height="10"/><rect x="1102" y="92" width="12" height="10"/><rect x="1116" y="92" width="12" height="10"/><rect x="1130" y="92" width="12" height="10"/></g>
<rect x="1142" y="72" width="2" height="32" fill="#2a3248"/>
</g>
<!-- white box -->
<rect x="1187" y="97" width="30" height="12" fill="#fff" stroke="#7a8496" stroke-width="2"/>
<!-- A icon -->
<g>
<rect x="1219" y="61" width="30" height="26" fill="url(#gAbox)" stroke="#8a9aba" stroke-width="2"/>
<path d="M1218 87 H1249 V60" fill="none" stroke="#33425f" stroke-width="2"/>
<text x="1235" y="82" font-family="Liberation Sans, sans-serif" font-weight="bold" font-size="24" text-anchor="middle" fill="#e00f4e" stroke="#e00f4e" stroke-width=".8">A</text>
<path d="M1240 90 L1248 98 H1244 V104 H1236 V98 H1232 Z" fill="#d684d2"/>
</g>
<!-- circles -->
<circle cx="1287" cy="83" r="19.800" fill="url(#gC1)" stroke="#969696" stroke-width="1.600"/>
<circle cx="1307" cy="101" r="19.800" fill="url(#gC2)" stroke="#969696" stroke-width="1.600"/>
<circle cx="1287" cy="83" r="19.800" fill="none" stroke="#969696" stroke-width="1.600" stroke-opacity=".8"/>
<!-- plus button -->
<g>
<rect x="1347" y="61" width="62" height="62" fill="#e2edfb" stroke="#000" stroke-width="2"/>
<rect x="1348" y="62" width="60" height="30" fill="url(#gBtn)"/>
<circle cx="1386" cy="100" r="19.500" fill="url(#gPlus)" stroke="#86b020" stroke-width="1.500"/>
<rect x="1376" y="96" width="20" height="8" fill="#2e2e2e"/><rect x="1382" y="90" width="8" height="20" fill="#2e2e2e"/>
</g>
</svg>
<div class="menu" id="mainmenu" style="left:506px;top:48px;width:510px;height:1216px">
<div class="mi" style="top:4px;width:498px;height:46px;line-height:46px"><span class="t" style="letter-spacing:-0.167px">Re<u>p</u>orts</span><i class="arr"></i></div>
<div class="mi hot" style="top:50px;width:498px;height:46px;line-height:46px"><span class="t" style="letter-spacing:-0.171px">D<u>e</u>scriptive Statistics</span><i class="arr"></i></div>
<div class="mi" style="top:96px;width:498px;height:46px;line-height:46px"><span class="t" style="letter-spacing:-0.167px"><u>B</u>ayesian Statistics</span><i class="arr"></i></div>
<div class="mi" style="top:142px;width:498px;height:46px;line-height:46px"><span class="t" style="letter-spacing:0.600px">Ta<u>b</u>les</span><i class="arr"></i></div>
<div class="mi" style="top:188px;width:498px;height:46px;line-height:46px"><span class="t" style="letter-spacing:-0.117px">Co<u>m</u>pare Means</span><i class="arr"></i></div>
<div class="mi" style="top:234px;width:498px;height:46px;line-height:46px"><span class="t" style="letter-spacing:-0.211px"><u>G</u>eneral Linear Model</span><i class="arr"></i></div>
<div class="mi" style="top:280px;width:498px;height:46px;line-height:46px"><span class="t" style="letter-spacing:-0.250px">Generali<u>z</u>ed Linear Models</span><i class="arr"></i></div>
<div class="mi" style="top:326px;width:498px;height:46px;line-height:46px"><span class="t" style="letter-spacing:-0.600px">Mi<u>x</u>ed Models</span><i class="arr"></i></div>
<div class="mi" style="top:372px;width:498px;height:46px;line-height:46px"><span class="t" style="letter-spacing:-0.125px"><u>C</u>orrelate</span><i class="arr"></i></div>
<div class="mi" style="top:418px;width:498px;height:46px;line-height:46px"><span class="t" style="letter-spacing:0.444px"><u>R</u>egression</span><i class="arr"></i></div>
<div class="mi" style="top:464px;width:498px;height:46px;line-height:46px"><span class="t" style="letter-spacing:0.250px">L<u>o</u>glinear</span><i class="arr"></i></div>
<div class="mi" style="top:510px;width:498px;height:46px;line-height:46px"><span class="t" style="letter-spacing:-0.143px">Neural Net<u>w</u>orks</span><i class="arr"></i></div>
<div class="mi" style="top:556px;width:498px;height:46px;line-height:46px"><span class="t" style="letter-spacing:0.143px">Classi<u>f</u>y</span><i class="arr"></i></div>
<div class="mi" style="top:602px;width:498px;height:46px;line-height:46px"><span class="t" style="letter-spacing:0.150px"><u>D</u>imension Reduction</span><i class="arr"></i></div>
<div class="mi" style="top:648px;width:498px;height:46px;line-height:46px"><span class="t" style="letter-spacing:0.000px">Sc<u>a</u>le</span><i class="arr"></i></div>
<div class="mi" style="top:694px;width:498px;height:46px;line-height:46px"><span class="t" style="letter-spacing:0.144px"><u>N</u>onparametric Tests</span><i class="arr"></i></div>
<div class="mi" style="top:740px;width:498px;height:46px;line-height:46px"><span class="t" style="letter-spacing:0.060px">Forecas<u>t</u>ing</span><i class="arr"></i></div>
<div class="mi" style="top:786px;width:498px;height:46px;line-height:46px"><span class="t" style="letter-spacing:-0.571px"><u>S</u>urvival</span><i class="arr"></i></div>
<div class="mi" style="top:832px;width:498px;height:46px;line-height:46px"><span class="t" style="letter-spacing:0.062px">M<u>u</u>ltiple Response</span><i class="arr"></i></div>
<div class="mi" style="top:878px;width:498px;height:50px;line-height:50px"><svg class="ico" style="left:6px;top:9px" width="32" height="32" viewBox="0 0 32 32"><use href="#ic-mva"/></svg><span class="t" style="left:46px;letter-spacing:-0.096px">Missing Value Anal<u>y</u>sis...</span></div>
<div class="mi" style="top:928px;width:498px;height:46px;line-height:46px"><span class="t" style="letter-spacing:-0.167px">Mul<u>t</u>iple Imputation</span><i class="arr"></i></div>
<div class="mi" style="top:974px;width:498px;height:46px;line-height:46px"><span class="t" style="letter-spacing:0.000px">Comp<u>l</u>ex Samples</span><i class="arr"></i></div>
<div class="mi" style="top:1020px;width:498px;height:50px;line-height:50px"><svg class="ico" style="left:6px;top:8px" width="32" height="32" viewBox="0 0 32 32"><use href="#ic-sim"/></svg><span class="t" style="left:46px;letter-spacing:0.000px">S<u>i</u>mulation...</span></div>
<div class="mi" style="top:1070px;width:498px;height:46px;line-height:46px"><span class="t" style="letter-spacing:-0.357px"><u>Q</u>uality Control</span><i class="arr"></i></div>
<div class="mi" style="top:1116px;width:498px;height:46px;line-height:46px"><span class="t" style="letter-spacing:-0.065px"><u>S</u>patial and Temporal Modeling...</span><i class="arr"></i></div>
<div class="mi" style="top:1162px;width:498px;height:46px;line-height:46px"><span class="t" style="letter-spacing:-0.333px">Direct Mar<u>k</u>eting</span><i class="arr"></i></div>
</div>
<div class="menu" id="submenu" style="left:1010px;top:100px;width:274px;height:412px">
<div class="mi" style="top:4px;width:262px;height:50px;line-height:50px"><svg class="ico" style="left:6px;top:9px" width="32" height="32" viewBox="0 0 32 32"><use href="#ic-freq"/></svg><span class="t" style="left:46px;letter-spacing:-0.154px"><u>F</u>requencies...</span></div>
<div class="mi hot" style="top:54px;width:262px;height:50px;line-height:50px"><svg class="ico" style="left:6px;top:8px" width="32" height="32" viewBox="0 0 32 32"><use href="#ic-desc"/></svg><span class="t" style="left:46px;letter-spacing:-0.143px"><u>D</u>escriptives...</span></div>
<div class="mi" style="top:104px;width:262px;height:50px;line-height:50px"><svg class="ico" style="left:6px;top:8px" width="32" height="32" viewBox="0 0 32 32"><use href="#ic-expl"/></svg><span class="t" style="left:46px;letter-spacing:-0.511px"><u>E</u>xplore...</span></div>
<div class="mi" style="top:154px;width:262px;height:50px;line-height:50px"><svg class="ico" style="left:6px;top:8px" width="32" height="32" viewBox="0 0 32 32"><use href="#ic-cross"/></svg><span class="t" style="left:46px;letter-spacing:0.109px"><u>C</u>rosstabs...</span></div>
<div class="mi" style="top:204px;width:262px;height:50px;line-height:50px"><svg class="ico" style="left:6px;top:8px" width="32" height="32" viewBox="0 0 32 32"><use href="#ic-turf"/></svg><span class="t" style="left:46px;letter-spacing:-0.275px">TURF Analysis</span></div>
<div class="mi" style="top:254px;width:262px;height:50px;line-height:50px"><svg class="ico" style="left:6px;top:9px" width="32" height="32" viewBox="0 0 32 32"><use href="#ic-ratio"/></svg><span class="t" style="left:46px;letter-spacing:-0.314px"><u>R</u>atio...</span></div>
<div class="mi" style="top:304px;width:262px;height:50px;line-height:50px"><svg class="ico" style="left:6px;top:9px" width="32" height="32" viewBox="0 0 32 32"><use href="#ic-pp"/></svg><span class="t" style="left:46px;letter-spacing:-0.300px"><u>P</u>-P Plots...</span></div>
<div class="mi" style="top:354px;width:262px;height:50px;line-height:50px"><svg class="ico" style="left:6px;top:9px" width="32" height="32" viewBox="0 0 32 32"><use href="#ic-qq"/></svg><span class="t" style="left:46px;letter-spacing:-0.564px"><u>Q</u>-Q Plots...</span></div>
</div>
<svg id="cursor" style="position:absolute;left:1244px;top:174px" width="30" height="44" viewBox="0 0 30 44"><path d="M3 4 L3 34 L10 27.5 L15.5 38.5 L19 37 L14 25.5 L25 25.5 Z" fill="#fff" stroke="#000" stroke-width="2" stroke-linejoin="miter"/></svg>
</body></html>
